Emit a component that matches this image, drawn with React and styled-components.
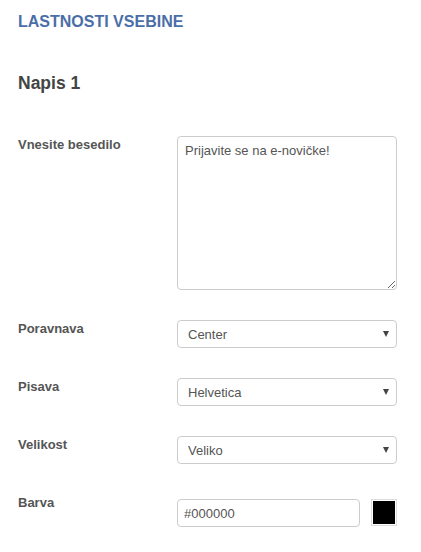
import React, { useState } from 'react'
import styled, { createGlobalStyle } from 'styled-components';

const GlobalStyle = createGlobalStyle`
    body {
        margin: 0;
        background: #fff;
        font-family: "Liberation Sans", Arial, sans-serif;
    }
`;

const Panel = styled.div`
    width: 421px;
    padding: 12px 24px 20px 18px;
    box-sizing: border-box;
`;

const PanelTitle = styled.h3`
    margin: 0;
    font-size: 16px;
    font-weight: bold;
    color: #4a6ea8;
    line-height: 19px;
`;

const SectionTitle = styled.h2`
    margin: 41px 0 0;
    font-size: 17.5px;
    font-weight: bold;
    color: #444;
    line-height: 22px;
`;

const FormGrid = styled.div`
    display: grid;
    grid-template-columns: 159px 220px;
    margin-top: 42px;
`;

const Row = styled.div`
    display: contents;
`;

const Label = styled.label`
    font-size: 13px;
    font-weight: bold;
    color: #555;
    line-height: 16px;
    padding-top: 1px;
    margin-bottom: 30px;
`;

const Field = styled.div`
    margin-top: ${p => p.offset || 0}px;
    margin-bottom: 30px;
    display: flex;
    gap: 11px;
    align-items: flex-start;
`;

const TextArea = styled.textarea`
    width: 220px;
    height: 154px;
    box-sizing: border-box;
    border: 1px solid #ccc;
    border-radius: 4px;
    padding: 6px 7px;
    font-family: "Liberation Sans", Arial, sans-serif;
    font-size: 13px;
    color: #555;
    line-height: 16px;
    resize: both;
    outline: none;
`;

const SelectWrap = styled.div`
    position: relative;
    width: 220px;
`;

const Select = styled.select`
    width: 100%;
    height: 28px;
    box-sizing: border-box;
    border: 1px solid #ccc;
    border-radius: 4px;
    background: #fff;
    padding: 0 10px;
    font-family: "Liberation Sans", Arial, sans-serif;
    font-size: 13px;
    color: #555;
    appearance: none;
    outline: none;
`;

const Arrow = styled.span`
    position: absolute;
    right: 8px;
    top: 11px;
    width: 0;
    height: 0;
    border-left: 3px solid transparent;
    border-right: 3px solid transparent;
    border-top: 6px solid #444;
    pointer-events: none;
`;

const TextInput = styled.input`
    width: 183px;
    height: 28px;
    box-sizing: border-box;
    border: 1px solid #ccc;
    border-radius: 4px;
    padding: 0 6px;
    font-family: "Liberation Sans", Arial, sans-serif;
    font-size: 13px;
    color: #555;
    outline: none;
`;

const Swatch = styled.div`
    width: 27px;
    height: 27px;
    box-sizing: border-box;
    background: ${p => p.color};
    border: 1px solid #ddd;
    box-shadow: inset 0 0 0 1px #fff;
`;

const SelectField = ({ value, options, onChange }) => (
    <SelectWrap>
        <Select value={value} onChange={e => onChange(e.target.value)}>
            {options.map(o => <option key={o} value={o}>{o}</option>)}
        </Select>
        <Arrow />
    </SelectWrap>
)

const App = () => {
    const [text, setText] = useState('Prijavite se na e-novičke!');
    const [align, setAlign] = useState('Center');
    const [font, setFont] = useState('Helvetica');
    const [size, setSize] = useState('Veliko');
    const [color, setColor] = useState('#000000');

  return (
    <>
        <GlobalStyle />
        <Panel>
            <PanelTitle>LASTNOSTI VSEBINE</PanelTitle>
            <SectionTitle>Napis 1</SectionTitle>
            <FormGrid>
                <Row>
                    <Label>Vnesite besedilo</Label>
                    <Field>
                        <TextArea value={text} onChange={e => setText(e.target.value)} />
                    </Field>
                </Row>
                <Row>
                    <Label>Poravnava</Label>
                    <Field>
                        <SelectField value={align} options={['Left', 'Center', 'Right']} onChange={setAlign} />
                    </Field>
                </Row>
                <Row>
                    <Label>Pisava</Label>
                    <Field>
                        <SelectField value={font} options={['Arial', 'Helvetica', 'Georgia']} onChange={setFont} />
                    </Field>
                </Row>
                <Row>
                    <Label>Velikost</Label>
                    <Field>
                        <SelectField value={size} options={['Malo', 'Srednje', 'Veliko']} onChange={setSize} />
                    </Field>
                </Row>
                <Row>
                    <Label>Barva</Label>
                    <Field offset={5}>
                        <TextInput value={color} onChange={e => setColor(e.target.value)} />
                        <Swatch color={color} />
                    </Field>
                </Row>
            </FormGrid>
        </Panel>
    </>
  )
}

export default App
